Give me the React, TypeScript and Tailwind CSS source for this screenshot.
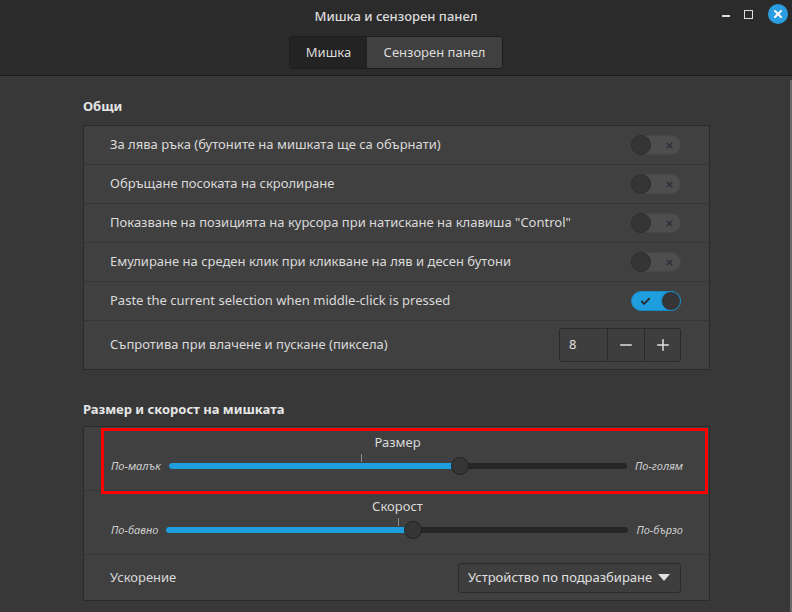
import { Check, Minus, Plus, X } from 'lucide-react'

const font = { fontFamily: '"Noto Sans", "Open Sans", sans-serif' }

function Toggle({ on }: { on?: boolean }) {
  if (on) {
    return (
      <div className="relative h-[20px] w-[50px] rounded-full bg-[#1f9ede] border border-[#1b8ac2]">
        <Check className="absolute left-[8px] top-[4px] h-[11px] w-[11px] text-[#2b2b2b]" strokeWidth={4} />
        <div className="absolute right-[-1px] top-[-1px] h-[20px] w-[20px] rounded-full bg-[#353535] border border-[#1b8ac2]" />
      </div>
    )
  }
  return (
    <div className="relative h-[20px] w-[50px] rounded-full bg-[#4e4e4e] border border-[#474747]">
      <div className="absolute left-[-1px] top-[-1px] h-[20px] w-[20px] rounded-full bg-[#353535] border border-[#2d2d2d]" />
      <X className="absolute right-[6px] top-[5px] h-[9px] w-[9px] text-[#2d2f3a]" strokeWidth={4} />
    </div>
  )
}

function Row({ label, on, last }: { label: string; on?: boolean; last?: boolean }) {
  return (
    <div className={`flex h-[39px] items-center justify-between pl-[26px] pr-[28px] ${last ? '' : 'border-b border-[#363636]'}`}>
      <span className="text-[13px] text-[#dadada]">{label}</span>
      <Toggle on={on} />
    </div>
  )
}

function Slider({ title, left, right, pct, tick }: { title: string; left: string; right: string; pct: number; tick: number }) {
  return (
    <div className="flex flex-col pt-[6px]">
      <div className="text-center text-[13px] text-[#dadada] leading-[18px] pl-[2px]">{title}</div>
      <div className="mt-[6px] flex items-center gap-[8px] pl-[27px] pr-[26px]">
        <span className="text-[11px] italic text-[#cfcfcf]">{left}</span>
        <div className="relative h-[18px] flex-1">
          <div className="absolute left-0 right-0 top-[6px] h-[6px] rounded-full bg-[#262626]" />
          <div className="absolute left-0 top-[6px] h-[6px] rounded-l-full bg-[#1f9ede]" style={{ width: `${pct}%` }} />
          <div className="absolute top-[-3px] h-[8px] w-px bg-[#8a8a8a]" style={{ left: `${tick}%` }} />
          <div
            className="absolute top-0 h-[18px] w-[18px] -translate-x-1/2 rounded-full bg-[#353535] border border-[#222]"
            style={{ left: `${pct}%` }}
          />
        </div>
        <span className="text-[11px] italic text-[#cfcfcf]">{right}</span>
      </div>
    </div>
  )
}

export default function App() {
  return (
    <div className="relative flex h-[612px] w-[792px] flex-col overflow-hidden bg-[#383838]" style={font}>
      {/* header */}
      <div className="h-[76px] shrink-0 border-b border-[#1c1c1c] bg-[#2b2b2b]">
        <div className="relative flex h-[33px] items-center justify-center">
          <span className="text-[13px] font-medium text-[#dcdcdc]">Мишка и сензорен панел</span>
          <div className="absolute right-[4px] top-[4px] flex items-center">
            <div className="mr-[14px] mt-[4px] h-[2px] w-[8px] bg-[#dcdcdc]" />
            <div className="mr-[15px] h-[9px] w-[9px] border border-[#dcdcdc]" />
            <div className="flex h-[20px] w-[20px] items-center justify-center rounded-full bg-[#2a9ee0]">
              <X className="h-[12px] w-[12px] text-white" strokeWidth={4} />
            </div>
          </div>
        </div>
        <div className="mt-[3px] flex justify-center">
          <div className="flex h-[33px] overflow-hidden rounded-[3px] border border-[#1e1e1e] text-[13px] text-[#dcdcdc]">
            <div className="flex w-[77px] items-center justify-center bg-[#232323]">Мишка</div>
            <div className="flex w-[135px] items-center justify-center bg-[#404040]">Сензорен панел</div>
          </div>
        </div>
      </div>

      {/* scrollbar */}
      <div className="absolute right-0 top-[80px] h-[532px] w-[2px] bg-[#6a6a6a]" />

      {/* content */}
      <div className="flex flex-col px-[83px] pr-[82px]">
        <div className="pt-[21px] text-[13px] font-bold text-[#e6e6e6] leading-[18px]">Общи</div>
        <div className="mt-[10px] border border-[#2b2b2b] bg-[#404040]">
          <Row label="За лява ръка (бутоните на мишката ще са обърнати)" />
          <Row label="Обръщане посоката на скролиране" />
          <Row label={'Показване на позицията на курсора при натискане на клавиша "Control"'} />
          <Row label="Емулиране на среден клик при кликване на ляв и десен бутони" />
          <Row label="Paste the current selection when middle-click is pressed" on />
          <div className="flex h-[48px] items-center justify-between pl-[26px] pr-[28px]">
            <span className="text-[13px] text-[#dadada]">Съпротива при влачене и пускане (пиксела)</span>
            <div className="flex h-[34px] overflow-hidden rounded-[3px] border border-[#2a2a2a] bg-[#3e3e3e] text-[#e0e0e0]">
              <div className="flex w-[47px] items-center pl-[9px] text-[13px]">8</div>
              <div className="flex w-[37px] items-center justify-center border-l border-[#2a2a2a]">
                <Minus className="h-[18px] w-[18px]" strokeWidth={2} />
              </div>
              <div className="flex w-[36px] items-center justify-center border-l border-[#2a2a2a]">
                <Plus className="h-[18px] w-[18px]" strokeWidth={2} />
              </div>
            </div>
          </div>
        </div>

        <div className="pt-[30px] text-[13px] font-bold text-[#e6e6e6] leading-[18px]">Размер и скорост на мишката</div>
        <div className="relative mt-[8px] border border-[#2b2b2b] bg-[#404040]">
          <div className="h-[64px] border-b border-[#363636]">
            <Slider title="Размер" left="По-малък" right="По-голям" pct={63.5} tick={42} />
          </div>
          <div className="h-[64px] border-b border-[#363636]">
            <Slider title="Скорост" left="По-бавно" right="По-бързо" pct={53.3} tick={50.2} />
          </div>
          <div className="flex h-[45px] items-center justify-between pl-[26px] pr-[28px]">
            <span className="text-[13px] text-[#dadada]">Ускорение</span>
            <div className="flex h-[30px] w-[223px] items-center justify-between rounded-[3px] border border-[#2a2a2a] bg-[#3e3e3e] pl-[9px] pr-[10px] text-[13px] text-[#e0e0e0]">
              <span>Устройство по подразбиране</span>
              <div className="h-0 w-0 border-x-[6px] border-t-[7px] border-x-transparent border-t-[#e0e0e0]" />
            </div>
          </div>
          {/* highlight annotation */}
          <div className="absolute left-[17px] top-[1px] h-[66px] w-[607px] border-[3px] border-[#ff0000]" />
        </div>
      </div>
    </div>
  )
}
